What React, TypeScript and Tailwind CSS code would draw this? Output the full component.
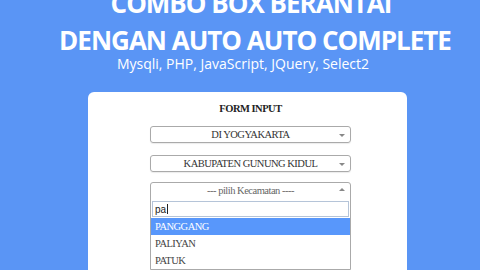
import { useState } from "react";

const OPTIONS = ["PANGGANG", "PALIYAN", "PATUK"];

export default function App() {
  const [query] = useState("pa");

  return (
    <div className="w-[480px] h-[270px] overflow-hidden bg-[#5a95f5] flex flex-col">
      <div className="mt-[-15px] text-white font-bold text-center font-['Open_Sans',sans-serif] text-[26px] leading-[37px] tracking-[-1px]">
        <div className="pl-[22px]">COMBO BOX BERANTAI</div>
        <div className="pl-[30px]">DENGAN AUTO AUTO COMPLETE</div>
      </div>
      <div className="text-white text-center font-['Open_Sans',sans-serif] text-[14px] leading-[18px] mt-[-4px] pl-[6px]">
        Mysqli, PHP, JavaScript, JQuery, Select2
      </div>

      <div className="ml-[88px] mt-[19px] w-[319px] flex-1 bg-white rounded-t-[6px] font-['Liberation_Serif',serif] tracking-[-0.5px]">
        <h2 className="text-center font-bold text-[10.5px] text-[#222] pt-[10px] pl-[6px] leading-[14px]">FORM INPUT</h2>

        <div className="ml-[62px] w-[201px] mt-[10px] flex flex-col">
          <Select label="DI YOGYAKARTA" />
          <div className="mt-[12px]">
            <Select label="KABUPATEN GUNUNG KIDUL" />
          </div>

          <div className="mt-[10px] border border-[#aaa] rounded-t-[3px]">
            <div className="h-[16px] flex items-center text-[10.5px] text-[#666] relative">
              <span className="flex-1 text-center">--- pilih Kecamatan ----</span>
              <span className="absolute right-[5px] top-[5px] w-0 h-0 border-l-[3px] border-r-[3px] border-b-[3px] border-l-transparent border-r-transparent border-b-[#888]" />
            </div>
            <div className="px-[1px] pt-[2px] pb-[1px]">
              <div className="h-[16px] border border-[#b5c4d8] flex items-center px-[2px] text-[10px] text-[#222] tracking-normal font-['Liberation_Sans',sans-serif]">
                {query}
                <span className="w-px h-[10px] bg-[#222] ml-px" />
              </div>
            </div>
            {OPTIONS.map((o, i) => (
              <div
                key={o}
                className={
                  i === 0
                    ? "h-[17px] flex items-center px-[4px] text-[10.5px] bg-[#5897fb] text-white"
                    : "h-[17px] flex items-center px-[4px] text-[10.5px] text-[#444]"
                }
              >
                {o}
              </div>
            ))}
          </div>
        </div>
      </div>
    </div>
  );
}

function Select({ label }: { label: string }) {
  return (
    <div className="h-[17px] border border-[#aaa] rounded-[3px] flex items-center relative text-[10.5px] text-[#333] shadow-[0_1px_1px_rgba(0,0,0,0.08)]">
      <span className="flex-1 text-center">{label}</span>
      <span className="absolute right-[5px] top-[7px] w-0 h-0 border-l-[3px] border-r-[3px] border-t-[3px] border-l-transparent border-r-transparent border-t-[#888]" />
    </div>
  );
}
